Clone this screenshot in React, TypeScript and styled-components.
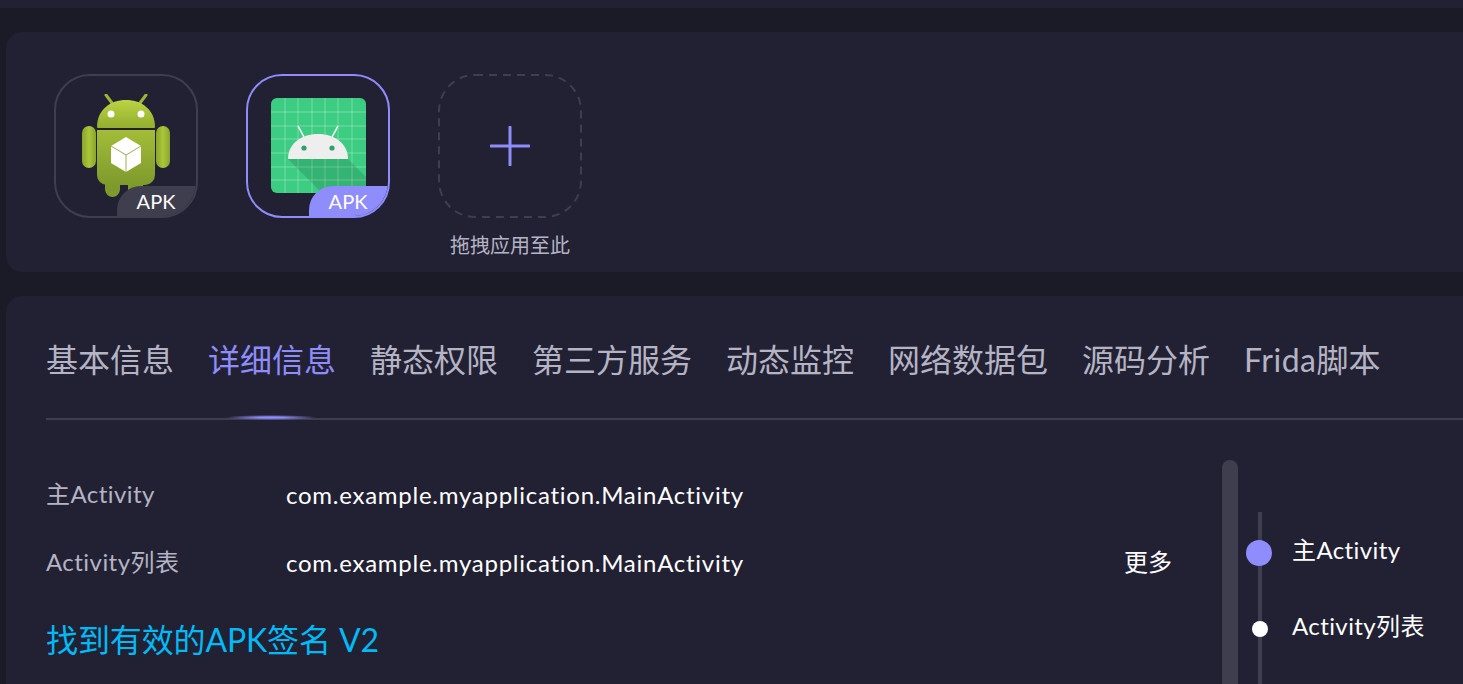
import React from 'react';
import styled, { createGlobalStyle } from 'styled-components';

const GlobalStyle = createGlobalStyle`
	html, body {
		margin: 0;
		height: 100%;
		overflow: hidden;
		background: #1b1a27;
		font-family: "Lato", "Noto Sans CJK SC", sans-serif;
	}
`;

const Page = styled.div`
	width: 1463px;
	height: 684px;
	overflow: hidden;
`;

const TopBar = styled.div`
	height: 8px;
	background: #222133;
	margin-bottom: 24px;
`;

const Panel = styled.section`
	margin-left: 6px;
	background: #222133;
	border-radius: 16px 0 0 16px;
`;

const AppsPanel = styled(Panel)`
	height: 240px;
	margin-bottom: 24px;
	padding: 42px 0 0 48px;
	box-sizing: border-box;
	display: flex;
	gap: 48px;
`;

const AppCard = styled.div<{ $active?: boolean }>`
	position: relative;
	width: 144px;
	height: 144px;
	box-sizing: border-box;
	border-radius: 36px;
	border: 2px solid ${p => (p.$active ? '#8f8cfb' : '#3f3e4f')};
	display: flex;
	align-items: center;
	justify-content: center;
	overflow: hidden;
`;

const ApkBadge = styled.span<{ $active?: boolean }>`
	position: absolute;
	right: -2px;
	bottom: -2px;
	width: 81px;
	height: 32px;
	padding-right: 3px;
	box-sizing: border-box;
	border-radius: 24px 0 0 0;
	background: ${p => (p.$active ? '#8f8cfb' : '#3f3e4f')};
	color: #fff;
	font-size: 20px;
	line-height: 30px;
	text-align: center;
`;

const AddColumn = styled.div`
	width: 144px;
	display: flex;
	flex-direction: column;
	align-items: center;
`;

const AddBox = styled.div`
	width: 144px;
	height: 144px;
	flex: none;
	display: flex;
	align-items: center;
	justify-content: center;
`;

const DashFrame = styled.svg`
	position: absolute;
`;

const AddHint = styled.div`
	margin-top: 15px;
	color: #b4b4c4;
	font-size: 20px;
	line-height: 24px;
	white-space: nowrap;
`;

const DetailPanel = styled(Panel)`
	height: 420px;
	padding: 40px 0 0 40px;
	box-sizing: border-box;
`;

const Tabs = styled.nav`
	display: flex;
	gap: 34px;
	height: 82px;
	border-bottom: 2px solid #3f3e4f;
`;

const Tab = styled.div<{ $active?: boolean }>`
	position: relative;
	height: 48px;
	line-height: 48px;
	font-size: 32px;
	white-space: nowrap;
	color: ${p => (p.$active ? '#8f8cfb' : '#b4b4c4')};
`;

const TabLatin = styled.span`
	letter-spacing: 0.5px;
`;

const TabGlow = styled.span`
	position: absolute;
	left: 17px;
	top: 79px;
	width: 92px;
	height: 5px;
	background: radial-gradient(closest-side, #8f8cfb 0%, #8f8cfb 25%, rgba(143, 140, 251, 0) 100%);
`;

const Body = styled.div`
	display: flex;
	margin-top: 40px;
`;

const Content = styled.div`
	width: 1176px;
	flex: none;
	padding-top: 14px;
`;

const InfoRow = styled.div`
	display: flex;
	align-items: center;
	height: 36px;
	margin-bottom: 32px;
	font-size: 24px;
`;

const InfoLabel = styled.div`
	width: 240px;
	flex: none;
	color: #b4b4c4;
	letter-spacing: 0.45px;
`;

const InfoValue = styled.div`
	flex: 1;
	padding-top: 4px;
	color: #fff;
	letter-spacing: 0.74px;
`;

const MoreLink = styled.div`
	color: #fff;
	margin-right: 50px;
`;

const SectionTitle = styled.h2`
	margin: 38px 0 0;
	font-size: 32px;
	font-weight: 400;
	line-height: 48px;
	letter-spacing: -0.12px;
	color: #00baf5;
`;

const ScrollTrack = styled.div`
	width: 16px;
	height: 300px;
	flex: none;
	border-radius: 8px;
	background: #3f3e4f;
`;

const Anchors = styled.div`
	position: relative;
	flex: 1;
	margin-left: 20px;
	padding-top: 72px;
	height: 300px;
`;

const AnchorLine = styled.div`
	position: absolute;
	left: 0;
	top: 52px;
	bottom: 0;
	width: 4px;
	background: #3f3e4f;
`;

const AnchorItem = styled.div`
	position: relative;
	height: 36px;
	margin-bottom: 40px;
	padding-left: 34px;
	line-height: 36px;
	font-size: 24px;
	letter-spacing: 0.4px;
	color: #fff;
	white-space: nowrap;
`;

const AnchorDot = styled.span<{ $active?: boolean }>`
	position: absolute;
	left: ${p => (p.$active ? '-12px' : '-6px')};
	top: ${p => (p.$active ? '8px' : '13px')};
	width: ${p => (p.$active ? '26px' : '16px')};
	height: ${p => (p.$active ? '26px' : '16px')};
	border-radius: 50%;
	background: ${p => (p.$active ? '#8f8cfb' : '#fff')};
`;

const RobotIcon = () => (
	<svg width="90" height="104" viewBox="0 0 90 104">
		<defs>
			<linearGradient id="robotHead" x1="0" y1="0" x2="0" y2="1">
				<stop offset="0" stopColor="#b9d544" />
				<stop offset="1" stopColor="#93ad2e" />
			</linearGradient>
			<linearGradient id="robotBody" x1="0" y1="0" x2="0" y2="1">
				<stop offset="0" stopColor="#a3bd38" />
				<stop offset="1" stopColor="#7e9a2c" />
			</linearGradient>
			<linearGradient id="robotArm" x1="0" y1="0" x2="1" y2="0">
				<stop offset="0" stopColor="#8aa42c" />
				<stop offset="0.5" stopColor="#aac63a" />
				<stop offset="1" stopColor="#8aa42c" />
			</linearGradient>
		</defs>
		<path d="M25 1l6 8M65 1l-6 8" stroke="#9bb534" strokeWidth="3" strokeLinecap="round" />
		<path d="M16 33c0-17 13-27 29-27s29 10 29 27c0 1-1 1-2 1H18c-1 0-2 0-2-1z" fill="url(#robotHead)" />
		<circle cx="30" cy="20" r="3.5" fill="#fff" />
		<circle cx="60" cy="20" r="3.5" fill="#fff" />
		<rect x="24" y="82" width="15" height="21" rx="7.5" fill="#7e9a2c" />
		<rect x="47" y="82" width="15" height="21" rx="7.5" fill="#7e9a2c" />
		<path d="M16 36h58v45a10 10 0 0 1-10 10H26a10 10 0 0 1-10-10z" fill="url(#robotBody)" />
		<rect x="1" y="32" width="14" height="42" rx="7" fill="url(#robotArm)" />
		<rect x="75" y="32" width="14" height="42" rx="7" fill="url(#robotArm)" />
		<path d="M45 43l15 9v17l-15 9-15-9V52z" fill="#fff" />
		<path d="M30 52l15 9 15-9M45 61v17" fill="none" stroke="#9aaf5a" strokeWidth="1" />
	</svg>
);

const StudioIcon = () => (
	<svg width="96" height="96" viewBox="0 0 96 96">
		<rect x="1" width="95" height="95" rx="6" fill="#3ccd82" />
		<g stroke="#fff" strokeOpacity=".3" strokeWidth="1">
			{[15, 28, 42, 55, 68, 82].map(v => (
				<path key={`v${v}`} d={`M${v} 0v95`} />
			))}
			{[14, 28, 41, 55, 69, 82].map(v => (
				<path key={`h${v}`} d={`M1 ${v}h95`} />
			))}
		</g>
		<path d="M18 61h60l18 18v10a6 6 0 0 1-6 6H52z" fill="#000" fillOpacity=".12" />
		<path d="M18 61c0-15 13-25 30-25s30 10 30 25z" fill="#eeeeee" />
		<path d="M28 28l6 11M68 28l-6 11" stroke="#eeeeee" strokeWidth="1.6" />
		<circle cx="34" cy="50" r="2.6" fill="#30a06a" />
		<circle cx="62" cy="50" r="2.6" fill="#30a06a" />
	</svg>
);

const App = () => {
	return (
		<Page>
			<GlobalStyle />
			<TopBar />
			<AppsPanel>
				<AppCard>
					<RobotIcon />
					<ApkBadge>APK</ApkBadge>
				</AppCard>
				<AppCard $active>
					<StudioIcon />
					<ApkBadge $active>APK</ApkBadge>
				</AppCard>
				<AddColumn>
					<AddBox>
						<DashFrame width="144" height="144" viewBox="0 0 144 144">
							<rect x="1" y="1" width="142" height="142" rx="36" fill="none" stroke="#3f3e4f" strokeWidth="2" strokeDasharray="8 6" />
						</DashFrame>
						<svg width="40" height="40" viewBox="0 0 40 40">
							<path d="M20 1v38M1 20h38" stroke="#8f8cfb" strokeWidth="3" strokeLinecap="round" />
						</svg>
					</AddBox>
					<AddHint>拖拽应用至此</AddHint>
				</AddColumn>
			</AppsPanel>
			<DetailPanel>
				<Tabs>
					<Tab>基本信息</Tab>
					<Tab $active>详细信息<TabGlow /></Tab>
					<Tab>静态权限</Tab>
					<Tab>第三方服务</Tab>
					<Tab>动态监控</Tab>
					<Tab>网络数据包</Tab>
					<Tab>源码分析</Tab>
					<Tab><TabLatin>Frida</TabLatin>脚本</Tab>
				</Tabs>
				<Body>
					<Content>
						<InfoRow>
							<InfoLabel>主Activity</InfoLabel>
							<InfoValue>com.example.myapplication.MainActivity</InfoValue>
						</InfoRow>
						<InfoRow>
							<InfoLabel>Activity列表</InfoLabel>
							<InfoValue>com.example.myapplication.MainActivity</InfoValue>
							<MoreLink>更多</MoreLink>
						</InfoRow>
						<SectionTitle>找到有效的APK签名 V2</SectionTitle>
					</Content>
					<ScrollTrack />
					<Anchors>
						<AnchorLine />
						<AnchorItem><AnchorDot $active />主Activity</AnchorItem>
						<AnchorItem><AnchorDot />Activity列表</AnchorItem>
					</Anchors>
				</Body>
			</DetailPanel>
		</Page>
	);
};

export default App;
